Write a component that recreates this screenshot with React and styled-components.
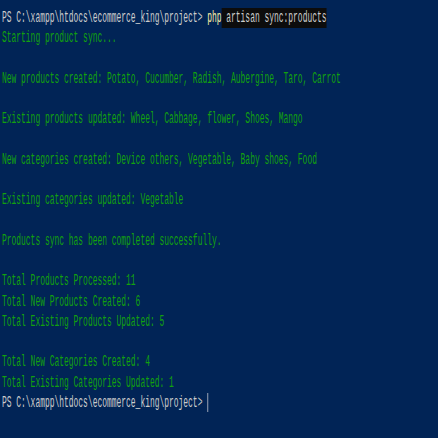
import React from 'react';
import styled, { createGlobalStyle } from 'styled-components';

const GlobalStyle = createGlobalStyle`
	html, body {
		margin: 0;
		padding: 0;
		background: #012456;
	}
`;

const Window = styled.div`
	width: 438px;
	height: 438px;
	overflow: hidden;
	background: #012456;
`;

// the console font is narrow, so squeeze a normal mono font sideways
const Screen = styled.div`
	width: 880px;
	padding: 8px 0 0 4px;
	transform: scaleX(0.497);
	transform-origin: left top;
	font-family: 'Liberation Mono', 'DejaVu Sans Mono', monospace;
	font-size: 16px;
`;

const Line = styled.div`
	height: 20.25px;
	line-height: 20.25px;
	white-space: pre;
	color: ${(p) => (p.$out ? '#13a10e' : '#cccccc')};
`;

const Cmd = styled.span`
	color: #f9f1a5;
`;

const Selected = styled.span`
	display: inline-block;
	height: 20.25px;
	line-height: 20.25px;
	background: #0c0c0c;
	color: #cccccc;
`;

const Caret = styled.span`
	display: inline-block;
	width: 2px;
	height: 19px;
	background: #9aa3b5;
	vertical-align: middle;
`;

const prompt = 'PS C:\\xampp\\htdocs\\ecommerce_king\\project> ';

const output = [
	'Starting product sync...',
	'',
	'New products created: Potato, Cucumber, Radish, Aubergine, Taro, Carrot',
	'',
	'Existing products updated: Wheel, Cabbage, flower, Shoes, Mango',
	'',
	'New categories created: Device others, Vegetable, Baby shoes, Food',
	'',
	'Existing categories updated: Vegetable',
	'',
	'Products sync has been completed successfully.',
	'',
	'Total Products Processed: 11',
	'Total New Products Created: 6',
	'Total Existing Products Updated: 5',
	'',
	'Total New Categories Created: 4',
	'Total Existing Categories Updated: 1',
];

const App = () => {
	return (
		<Window>
			<GlobalStyle />
			<Screen>
				<Line>
					{prompt}
					<Cmd>php</Cmd>
					<Selected> artisan sync:products</Selected>
				</Line>
				{output.map((text, i) => (
					<Line key={i} $out>
						{text}
					</Line>
				))}
				<Line>
					{prompt}
					<Caret />
				</Line>
			</Screen>
		</Window>
	);
};

export default App;
